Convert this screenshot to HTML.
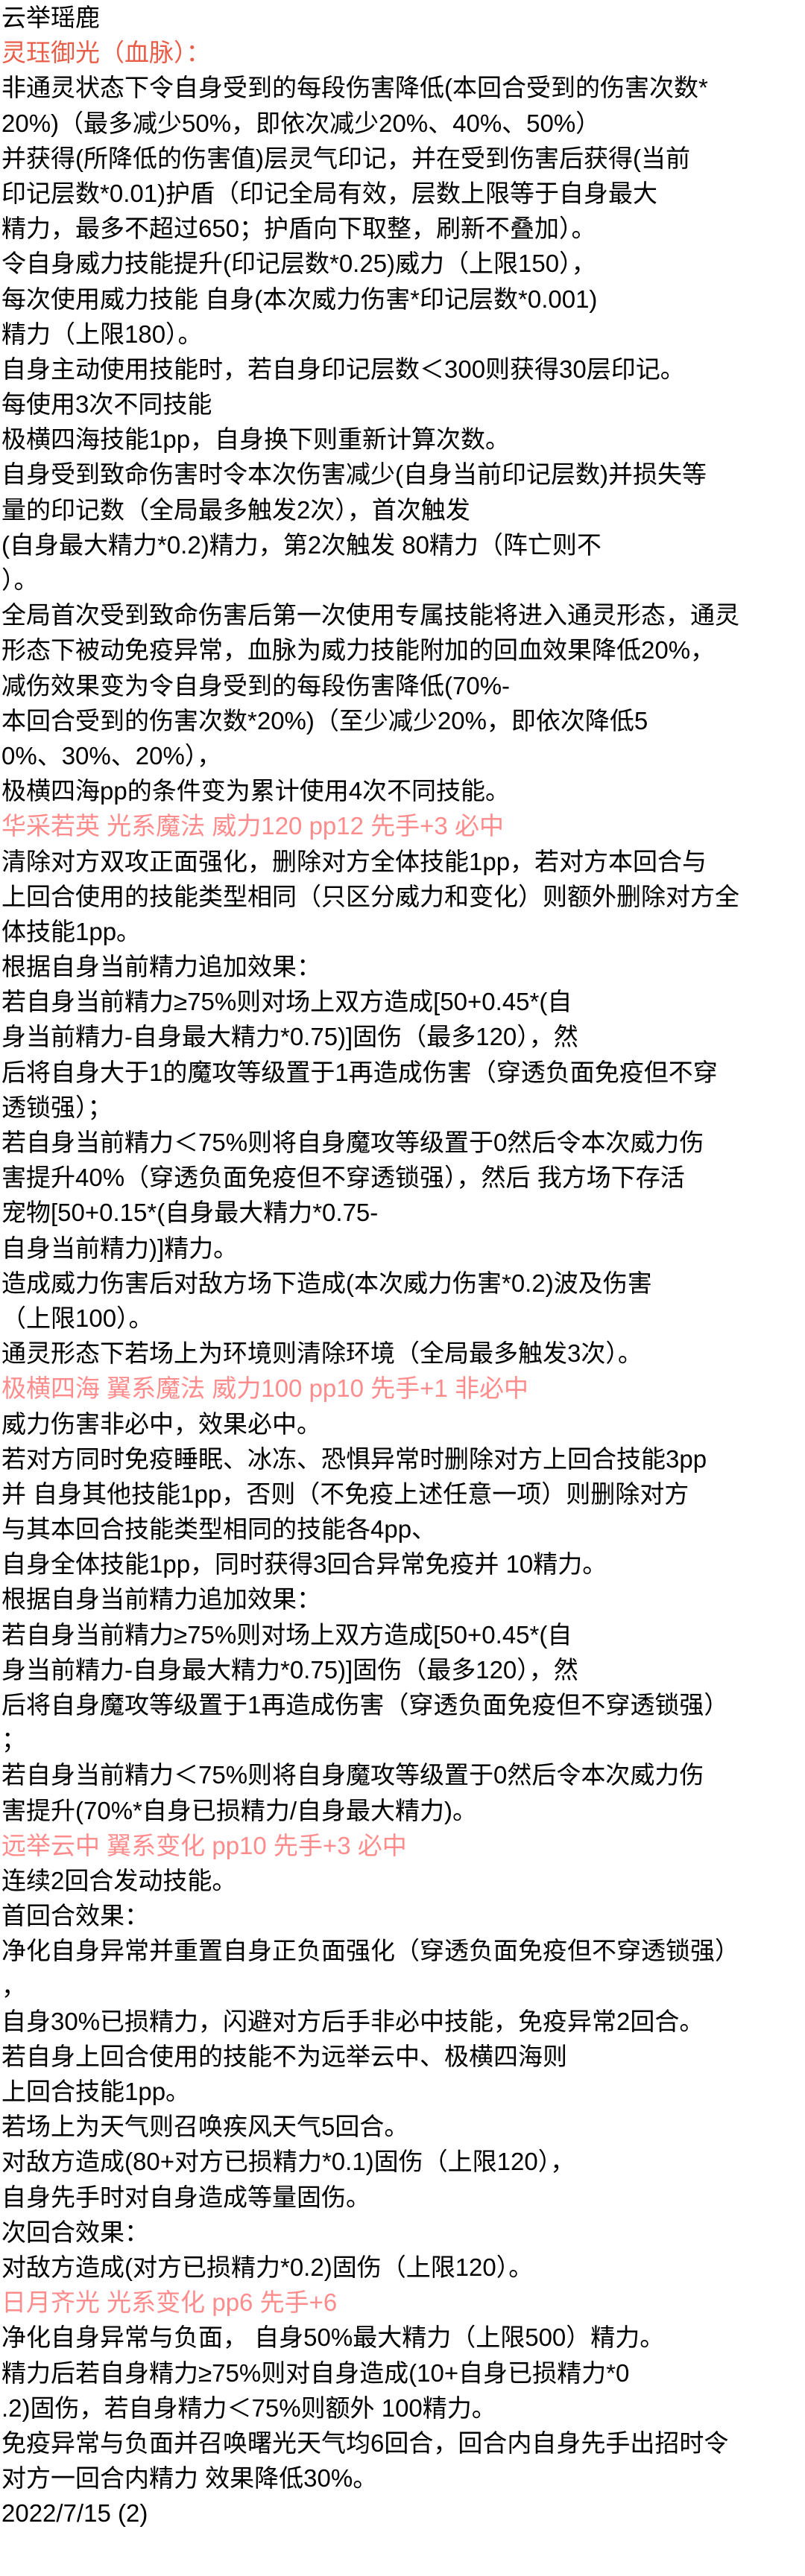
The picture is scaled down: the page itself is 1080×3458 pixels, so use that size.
<!DOCTYPE html>
<html><head><meta charset="utf-8"><style>
html,body{margin:0;padding:0;background:#fff;}
body{width:1080px;height:3458px;overflow:hidden;}
.c{font-family:"Liberation Sans","Noto Sans CJK SC",sans-serif;font-size:33px;line-height:47.2px;color:#000;padding-left:2px;}
.c div{height:47.2px;white-space:pre;}
.r{color:#e85d48;}
.p{color:#ff8c8c;}
</style></head><body><div class="c">
<div>云举瑶鹿</div>
<div class="r">灵珏御光（血脉）：</div>
<div>非通灵状态下令自身受到的每段伤害降低(本回合受到的伤害次数*</div>
<div>20%)（最多减少50%，即依次减少20%、40%、50%）</div>
<div>并获得(所降低的伤害值)层灵气印记，并在受到伤害后获得(当前</div>
<div>印记层数*0.01)护盾（印记全局有效，层数上限等于自身最大</div>
<div>精力，最多不超过650；护盾向下取整，刷新不叠加）。</div>
<div>令自身威力技能提升(印记层数*0.25)威力（上限150），</div>
<div>每次使用威力技能 自身(本次威力伤害*印记层数*0.001)</div>
<div>精力（上限180）。</div>
<div>自身主动使用技能时，若自身印记层数＜300则获得30层印记。</div>
<div>每使用3次不同技能</div>
<div>极横四海技能1pp，自身换下则重新计算次数。</div>
<div>自身受到致命伤害时令本次伤害减少(自身当前印记层数)并损失等</div>
<div>量的印记数（全局最多触发2次），首次触发</div>
<div>(自身最大精力*0.2)精力，第2次触发 80精力（阵亡则不</div>
<div>）。</div>
<div>全局首次受到致命伤害后第一次使用专属技能将进入通灵形态，通灵</div>
<div>形态下被动免疫异常，血脉为威力技能附加的回血效果降低20%，</div>
<div>减伤效果变为令自身受到的每段伤害降低(70%-</div>
<div>本回合受到的伤害次数*20%)（至少减少20%，即依次降低5</div>
<div>0%、30%、20%），</div>
<div>极横四海pp的条件变为累计使用4次不同技能。</div>
<div class="p">华采若英 光系魔法 威力120 pp12 先手+3 必中</div>
<div>清除对方双攻正面强化，删除对方全体技能1pp，若对方本回合与</div>
<div>上回合使用的技能类型相同（只区分威力和变化）则额外删除对方全</div>
<div>体技能1pp。</div>
<div>根据自身当前精力追加效果：</div>
<div>若自身当前精力≥75%则对场上双方造成[50+0.45*(自</div>
<div>身当前精力-自身最大精力*0.75)]固伤（最多120），然</div>
<div>后将自身大于1的魔攻等级置于1再造成伤害（穿透负面免疫但不穿</div>
<div>透锁强）；</div>
<div>若自身当前精力＜75%则将自身魔攻等级置于0然后令本次威力伤</div>
<div>害提升40%（穿透负面免疫但不穿透锁强），然后 我方场下存活</div>
<div>宠物[50+0.15*(自身最大精力*0.75-</div>
<div>自身当前精力)]精力。</div>
<div>造成威力伤害后对敌方场下造成(本次威力伤害*0.2)波及伤害</div>
<div>（上限100）。</div>
<div>通灵形态下若场上为环境则清除环境（全局最多触发3次）。</div>
<div class="p">极横四海 翼系魔法 威力100 pp10 先手+1 非必中</div>
<div>威力伤害非必中，效果必中。</div>
<div>若对方同时免疫睡眠、冰冻、恐惧异常时删除对方上回合技能3pp</div>
<div>并 自身其他技能1pp，否则（不免疫上述任意一项）则删除对方</div>
<div>与其本回合技能类型相同的技能各4pp、</div>
<div>自身全体技能1pp，同时获得3回合异常免疫并 10精力。</div>
<div>根据自身当前精力追加效果：</div>
<div>若自身当前精力≥75%则对场上双方造成[50+0.45*(自</div>
<div>身当前精力-自身最大精力*0.75)]固伤（最多120），然</div>
<div>后将自身魔攻等级置于1再造成伤害（穿透负面免疫但不穿透锁强）</div>
<div>；</div>
<div>若自身当前精力＜75%则将自身魔攻等级置于0然后令本次威力伤</div>
<div>害提升(70%*自身已损精力/自身最大精力)。</div>
<div class="p">远举云中 翼系变化 pp10 先手+3 必中</div>
<div>连续2回合发动技能。</div>
<div>首回合效果：</div>
<div>净化自身异常并重置自身正负面强化（穿透负面免疫但不穿透锁强）</div>
<div>，</div>
<div>自身30%已损精力，闪避对方后手非必中技能，免疫异常2回合。</div>
<div>若自身上回合使用的技能不为远举云中、极横四海则</div>
<div>上回合技能1pp。</div>
<div>若场上为天气则召唤疾风天气5回合。</div>
<div>对敌方造成(80+对方已损精力*0.1)固伤（上限120），</div>
<div>自身先手时对自身造成等量固伤。</div>
<div>次回合效果：</div>
<div>对敌方造成(对方已损精力*0.2)固伤（上限120）。</div>
<div class="p">日月齐光 光系变化 pp6 先手+6</div>
<div>净化自身异常与负面， 自身50%最大精力（上限500）精力。</div>
<div>精力后若自身精力≥75%则对自身造成(10+自身已损精力*0</div>
<div>.2)固伤，若自身精力＜75%则额外 100精力。</div>
<div>免疫异常与负面并召唤曙光天气均6回合，回合内自身先手出招时令</div>
<div>对方一回合内精力 效果降低30%。</div>
<div>2022/7/15 (2)</div>
</div></body></html>
